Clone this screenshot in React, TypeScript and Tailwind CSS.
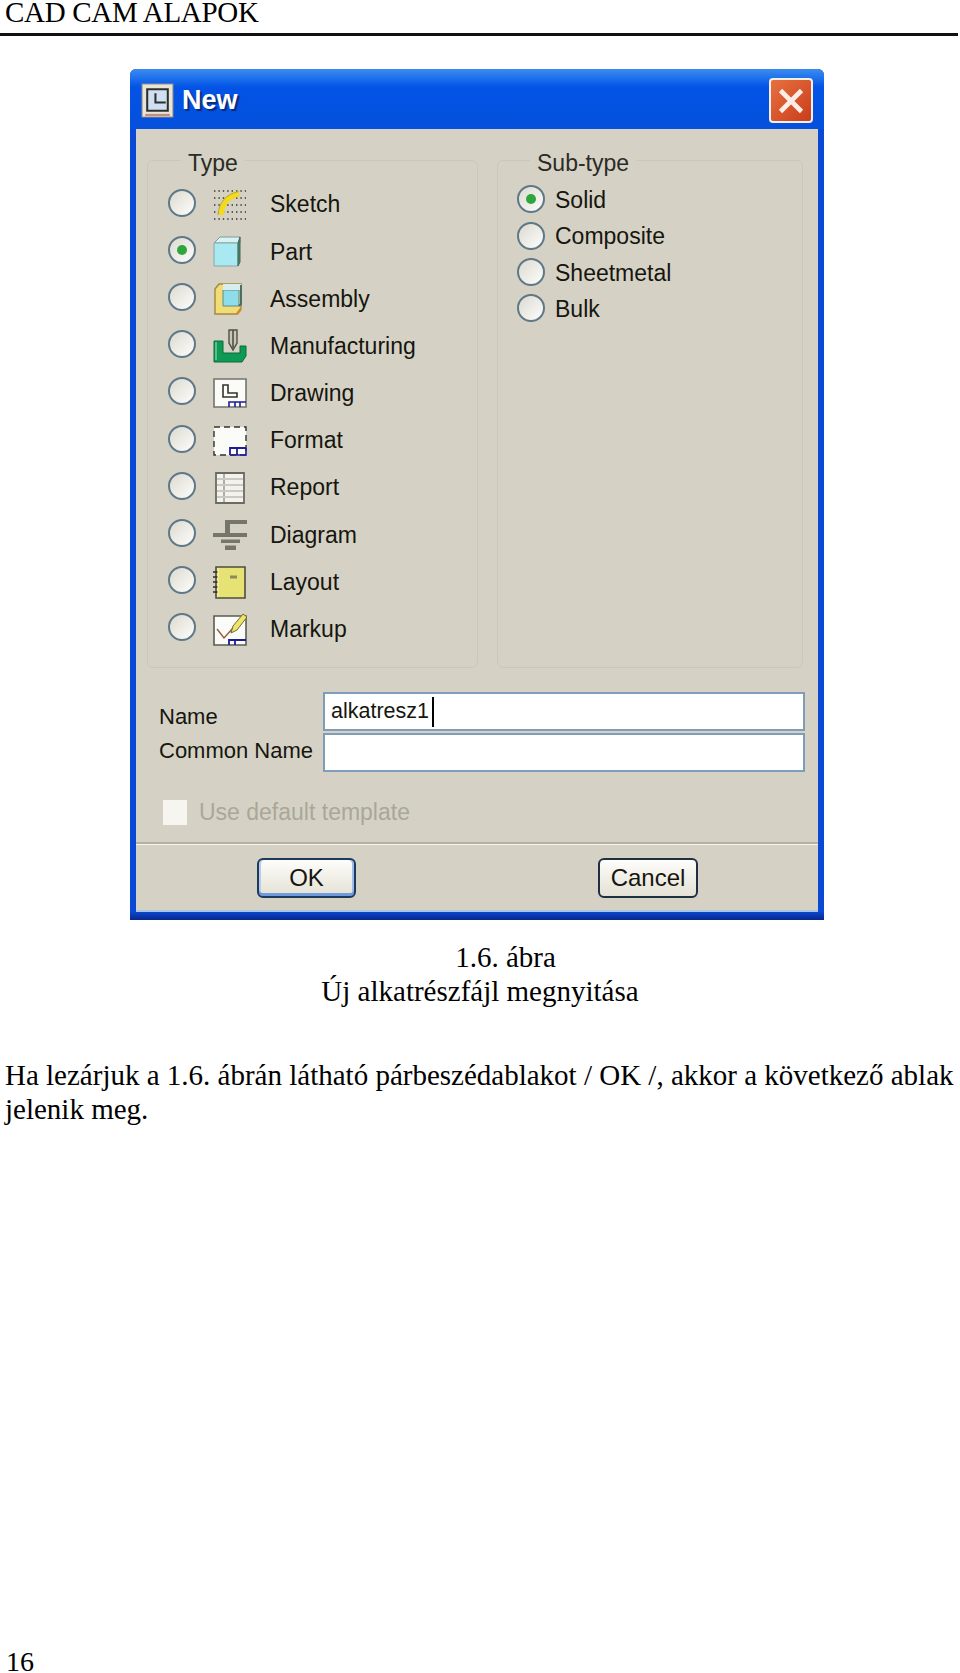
const types = [
  { label: "Sketch", icon: <SketchIcon /> },
  { label: "Part", icon: <PartIcon />, checked: true },
  { label: "Assembly", icon: <AssemblyIcon /> },
  { label: "Manufacturing", icon: <ManufacturingIcon /> },
  { label: "Drawing", icon: <DrawingIcon /> },
  { label: "Format", icon: <FormatIcon /> },
  { label: "Report", icon: <ReportIcon /> },
  { label: "Diagram", icon: <DiagramIcon /> },
  { label: "Layout", icon: <LayoutIcon /> },
  { label: "Markup", icon: <MarkupIcon /> },
]

const subTypes = [
  { label: "Solid", checked: true },
  { label: "Composite" },
  { label: "Sheetmetal" },
  { label: "Bulk" },
]

function Icon({ children }: { children: React.ReactNode }) {
  return (
    <svg viewBox="0 0 34 34" className="w-[34px] h-[34px] shrink-0">
      {children}
    </svg>
  )
}

function SketchIcon() {
  return (
    <Icon>
      <path d="M1 3H33M1 10H33M1 17H33M1 24H33M1 31H33" stroke="#33332e" strokeWidth="1.4" strokeDasharray="1.4 3" />
      <path d="M8 27C9 15 15 8 26 6" fill="none" stroke="#f2da1e" strokeWidth="5.5" />
      <path d="M5 27C6 14 13 6 26 3.5" fill="none" stroke="#b9a53a" strokeWidth="1" />
    </Icon>
  )
}

function PartIcon() {
  return (
    <Icon>
      <path d="M1 8L7 2H27V8Z" fill="#d9f3f3" stroke="#7f9a98" />
      <path d="M1 8H25V31H1Z" fill="#a9eaf2" stroke="#86a8a6" />
      <path d="M25 8L27 2L27 27L25 31Z" fill="#4e8068" stroke="#3f6a5a" />
    </Icon>
  )
}

function AssemblyIcon() {
  return (
    <Icon>
      <path d="M2 7L6 2H28V26L24 32H2Z" fill="#f2dc78" stroke="#a08a3a" strokeWidth="1.4" />
      <path d="M10 8H26V24H10Z" fill="#8fdcea" stroke="#5f8a8a" />
      <path d="M10 2H28V8H10Z" fill="#d7eeee" />
      <path d="M26 24L28 22V3" fill="none" stroke="#4e6e62" strokeWidth="2" />
      <path d="M24 32L28 27" stroke="#d78a2a" strokeWidth="2.5" />
    </Icon>
  )
}

function ManufacturingIcon() {
  return (
    <Icon>
      <path d="M1 12H10V24H27V17H33V27L29 33H1Z" fill="#0e9a54" stroke="#0a6a3a" />
      <path d="M3 13V31" stroke="#7ad0a0" strokeWidth="1.4" />
      <path d="M16 1H24V14L20 21L16 14Z" fill="#c9c6b8" stroke="#4f5044" strokeWidth="1.4" />
      <path d="M20 1V19" stroke="#4f5044" strokeWidth="1.6" />
    </Icon>
  )
}

function DrawingIcon() {
  return (
    <Icon>
      <path d="M1 3H33V31H1Z" fill="#fbfbf8" stroke="#74746c" strokeWidth="1.6" />
      <path d="M10 9H15V17H24V21H10Z" fill="none" stroke="#33332e" strokeWidth="1.6" />
      <path d="M16 31V26H33M22 26V31M27 26V31" fill="none" stroke="#1c1c9a" strokeWidth="1.6" />
    </Icon>
  )
}

function FormatIcon() {
  return (
    <Icon>
      <path d="M1 3H33V31H1Z" fill="#fbfbf8" />
      <path d="M1 3H33V31H1Z" fill="none" stroke="#33332e" strokeWidth="1.4" strokeDasharray="6 4" />
      <path d="M17 31V24H33M24 24V31" fill="none" stroke="#1c1c9a" strokeWidth="1.8" />
      <path d="M17 31H33V24" fill="none" stroke="#1c1c9a" strokeWidth="1.6" />
    </Icon>
  )
}

function ReportIcon() {
  return (
    <Icon>
      <path d="M3 2H31V32H3Z" fill="#f3f2ec" stroke="#6b6b62" strokeWidth="1.8" />
      <path d="M4 8H30M4 14H30M4 20H30M4 26H30" stroke="#a3a298" strokeWidth="1.2" />
      <path d="M11 3V31" stroke="#6b6b62" strokeWidth="1" strokeDasharray="4 2" />
    </Icon>
  )
}

function DiagramIcon() {
  return (
    <Icon>
      <path d="M12 2H34V6H17V15H34V19H0V15H12Z" fill="#75756b" />
      <path d="M8 21.5H27V25H8Z" fill="#75756b" />
      <path d="M12 27.5H23V32H12Z" fill="#75756b" />
    </Icon>
  )
}

function LayoutIcon() {
  return (
    <Icon>
      <path d="M3 2H32V33H3Z" fill="#e7e274" stroke="#4d4d3c" strokeWidth="1.6" />
      <path d="M0 7H5M0 12H5M0 17H5M0 22H5M0 27H5" stroke="#2f2f28" strokeWidth="1.5" />
      <path d="M17 12H24" stroke="#8f8a60" strokeWidth="3" />
      <path d="M5 3V32" stroke="#f8f6c0" strokeWidth="1" />
    </Icon>
  )
}

function MarkupIcon() {
  return (
    <Icon>
      <path d="M1 4H33V33H1Z" fill="#fbfbf8" stroke="#5c5c54" strokeWidth="1.6" />
      <path d="M4 17L11 26L20 16" fill="none" stroke="#8a5a3a" strokeWidth="1.3" />
      <path d="M20 14L30 2L34 5L24 18L18 21Z" fill="#efe36a" stroke="#6b6a38" />
      <path d="M16 33V28H33M22 28V33" fill="none" stroke="#1c1c9a" strokeWidth="1.8" />
    </Icon>
  )
}

function Radio({ checked }: { checked?: boolean }) {
  return (
    <span className="w-[28px] h-[28px] shrink-0 rounded-full border-2 border-[#5f7888] bg-linear-to-br from-[#dcdad0] to-[#fdfdfb] flex items-center justify-center">
      {checked && <span className="w-[10px] h-[10px] rounded-full bg-[#2fa63c]" />}
    </span>
  )
}

function Legend({ children }: { children: React.ReactNode }) {
  return (
    <legend className="ml-[13px] h-[26px] px-[7px] text-[23px] leading-[26px] text-[#2b2b26]">
      <span className="relative top-[3px]">{children}</span>
    </legend>
  )
}

export default function App() {
  return (
    <div className="w-[960px] h-[1673px] flex flex-col overflow-hidden bg-white text-black font-['Liberation_Serif',serif]">
      <div className="h-[36px] mr-[2px] border-b-[3px] border-[#111] pl-[5px] text-[29px] leading-[25px] tracking-[-0.3px]">
        CAD CAM ALAPOK
      </div>

      <div className="ml-[130px] mt-[33px] w-[694px] h-[851px] shrink-0 flex flex-col rounded-t-[6px] bg-[#0a48d6] font-['Liberation_Sans',sans-serif] text-[#16160f]">
        <div className="h-[60px] shrink-0 flex items-center pl-[11px] pr-[11px] pt-[3px] rounded-t-[6px] bg-linear-to-b from-[#3a8cf0] from-0% via-[#0353e6] via-30% to-[#0550dc]">
          <svg viewBox="0 0 32 34" className="w-[33px] h-[35px] shrink-0">
            <path d="M1 1H31V33H1Z" fill="#e8e4d8" stroke="#9c8f86" />
            <path d="M6 6H26V27H6Z" fill="#cfe0f4" stroke="#2f2f2a" strokeWidth="2" />
            <path d="M14 10V19H24" fill="none" stroke="#2f2f2a" strokeWidth="2" />
            <path d="M4 31H28" stroke="#c28a78" strokeWidth="2" />
          </svg>
          <span className="ml-[8px] text-[27px] font-bold leading-none text-white [text-shadow:2px_2px_1px_#0a2a80]">New</span>
          <div className="ml-auto w-[44px] h-[45px] flex items-center justify-center rounded-[4px] border-2 border-[#f2efe9] bg-linear-to-br from-[#e8703f] to-[#c83c1a]">
            <svg viewBox="0 0 24 24" className="w-[28px] h-[28px]">
              <path d="M3 3L21 21M21 3L3 21" stroke="#fbeee8" strokeWidth="4" />
            </svg>
          </div>
        </div>

        <div className="flex-1 flex flex-col mx-[6px] bg-[#d5d2c5] border-b-2 border-[#a9c6e8]">
          <div className="flex gap-[19px] pt-[18px] pl-[11px]">
            <fieldset className="w-[331px] h-[521px] border border-[#cbc8ba] rounded-[6px] pl-[20px] pt-[6px]">
              <Legend>Type</Legend>
              {types.map(t => (
                <div key={t.label} className="h-[47.2px] flex items-center text-[23px]">
                  <Radio checked={t.checked} />
                  <span className="ml-[17px] mt-[4px]">{t.icon}</span>
                  <span className="ml-[23px] mt-[4px]">{t.label}</span>
                </div>
              ))}
            </fieldset>
            <fieldset className="w-[306px] h-[521px] border border-[#cbc8ba] rounded-[6px] pl-[19px] pt-[8px]">
              <Legend>Sub-type</Legend>
              {subTypes.map(t => (
                <div key={t.label} className="h-[36.4px] flex items-center text-[23px]">
                  <Radio checked={t.checked} />
                  <span className="ml-[10px] mt-[2px]">{t.label}</span>
                </div>
              ))}
            </fieldset>
          </div>

          <div className="mt-[24px] pl-[23px] grid grid-cols-[164px_482px] gap-y-[2px] text-[22px]">
            <div className="h-[39px] pt-[12px] leading-[26px]">Name</div>
            <div className="h-[39px] border-2 border-[#7f9db9] bg-white pl-[6px] flex items-center text-[21.5px]">
              alkatresz1
              <span className="ml-[3px] w-[2px] h-[30px] bg-black" />
            </div>
            <div className="h-[39px] leading-[36px]">Common Name</div>
            <div className="h-[39px] border-2 border-[#7f9db9] bg-white" />
          </div>

          <div className="mt-[23px] ml-[27px] flex items-center">
            <div className="w-[24px] h-[25px] bg-[#f6f5f0]" />
            <span className="ml-[12px] text-[23px] text-[#a9a79a]">Use default template</span>
          </div>

          <div className="mt-[12px] h-[3px] border-t-2 border-[#b3b1a3] border-b border-b-[#f4f3ee]" />

          <div className="mt-[13px] flex text-[24px]">
            <button className="ml-[121px] w-[99px] h-[40px] rounded-[6px] border-2 border-[#1d3a5c] bg-linear-to-b from-[#fdfdfb] to-[#e4e1d4] shadow-[inset_0_-3px_0_#6f9bdc,inset_2px_0_0_#b7cdec,inset_-2px_0_0_#9dbcea]">
              OK
            </button>
            <button className="ml-[242px] w-[100px] h-[40px] rounded-[6px] border-2 border-[#1f3040] bg-linear-to-b from-[#fdfdfb] to-[#e4e1d4]">
              Cancel
            </button>
          </div>
        </div>
        <div className="h-[8px] shrink-0 bg-linear-to-b from-[#0a46cc] to-[#08288c]" />
      </div>

      <div className="mt-[20px] text-center text-[29px] leading-[34px]">
        <div className="pl-[51px]">1.6. ábra</div>
        <div>Új alkatrészfájl megnyitása</div>
      </div>

      <div className="mt-[50px] pl-[5px] text-[29px] leading-[34px] whitespace-nowrap">
        <div>Ha lezárjuk a 1.6. ábrán látható párbeszédablakot / OK /, akkor a következő ablak</div>
        <div>jelenik meg.</div>
      </div>

      <div className="mt-auto h-[22px] pl-[6px] text-[28px] leading-[22px]">16</div>
    </div>
  )
}
